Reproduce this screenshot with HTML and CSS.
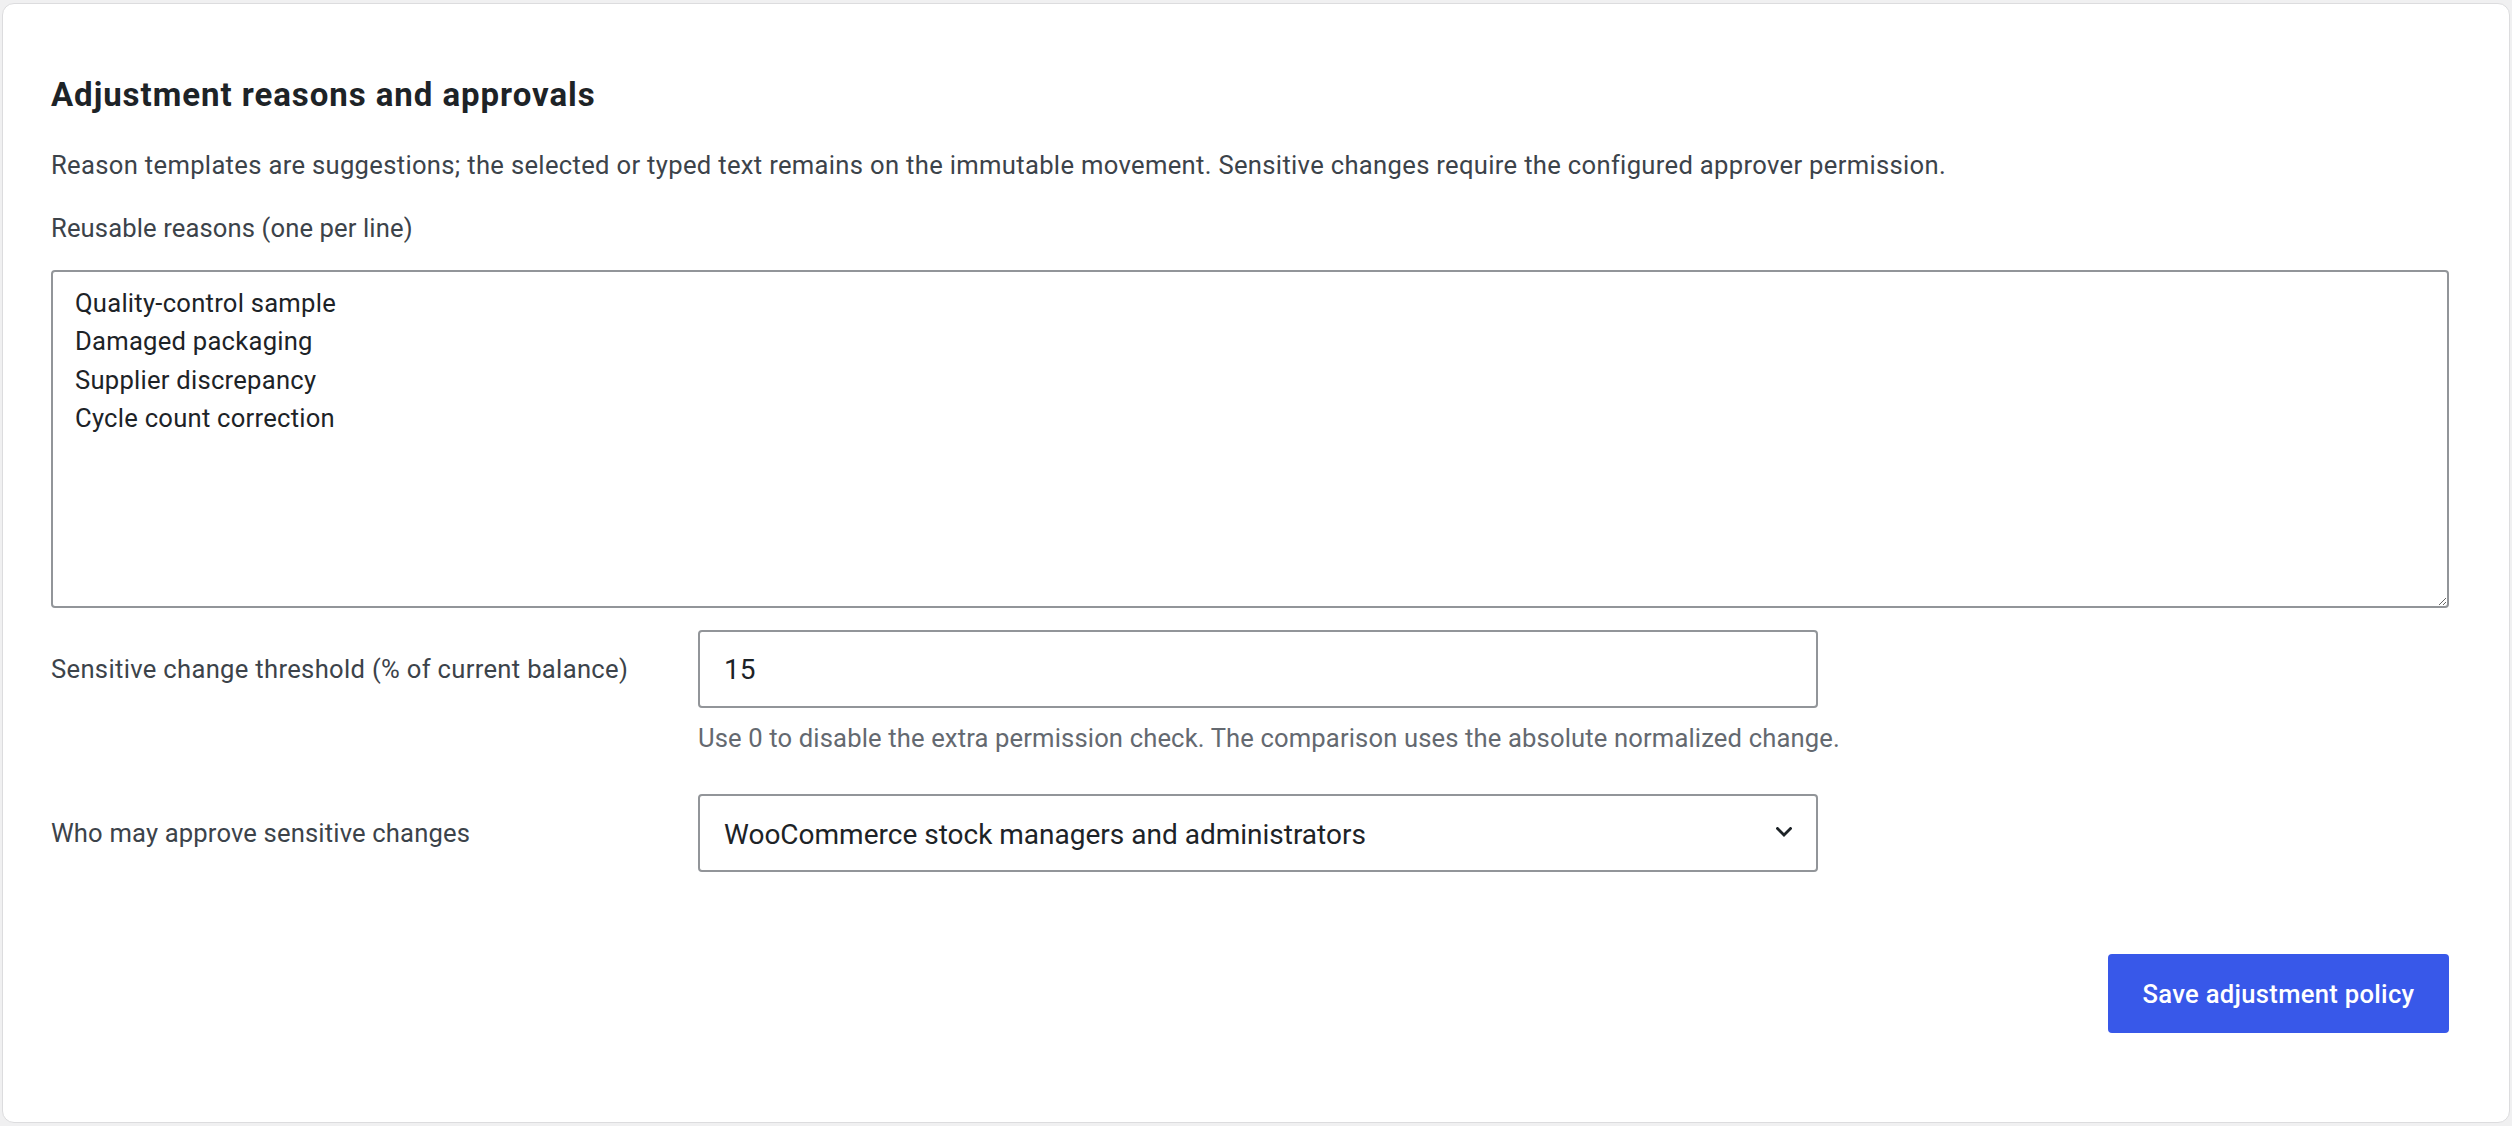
FILE: index.html
```html
<!DOCTYPE html>
<html lang="en">
<head>
<meta charset="utf-8">
<title>Adjustment reasons and approvals</title>
<link rel="stylesheet" href="styles.css">
</head>
<body>
<main class="page">
  <section class="card">
    <h2 class="card-title">Adjustment reasons and approvals</h2>
    <p class="card-intro">Reason templates are suggestions; the selected or typed text remains on the immutable movement. Sensitive changes require the configured approver permission.</p>

    <form class="policy-form">
      <label class="field-label" for="reasons">Reusable reasons (one per line)</label>
      <textarea id="reasons" class="reasons" spellcheck="false">Quality-control sample
Damaged packaging
Supplier discrepancy
Cycle count correction</textarea>

      <div class="field-row">
        <label class="row-label" for="threshold">Sensitive change threshold (% of current balance)</label>
        <div class="row-control">
          <input id="threshold" class="text-input" type="text" value="15">
          <p class="help">Use 0 to disable the extra permission check. The comparison uses the absolute normalized change.</p>
        </div>
      </div>

      <div class="field-row field-row-select">
        <label class="row-label row-label-tight" for="approver">Who may approve sensitive changes</label>
        <div class="row-control">
          <div class="select-wrap">
            <select id="approver" class="select-input">
              <option>WooCommerce stock managers and administrators</option>
              <option>Administrators only</option>
            </select>
            <svg class="chevron" width="16" height="10" viewBox="0 0 16 10" aria-hidden="true">
              <path d="M1.5 1.5 L8 8 L14.5 1.5" fill="none" stroke="#1d2327" stroke-width="2.8" stroke-linecap="square"/>
            </svg>
          </div>
        </div>
      </div>

      <div class="actions">
        <button type="button" class="btn-primary">Save adjustment policy</button>
      </div>
    </form>
  </section>
</main>
</body>
</html>
```

FILE: styles.css
```css
* {
  box-sizing: border-box;
}

html,
body {
  margin: 0;
  padding: 0;
  background: #f0f0f1;
}

body {
  font-family: Roboto, "Liberation Sans", Arial, sans-serif;
  font-size: 25.6px;
  letter-spacing: 0.32px;
  color: #3c434a;
}

.page {
  padding: 3px 2px 3px 2px;
}

.card {
  background: #ffffff;
  border: 1px solid #dcdcde;
  border-radius: 12px;
  padding: 71px 60px 88px 48px;
  min-height: 1120px;
}

.card-title {
  margin: 0;
  font-size: 33px;
  line-height: 40px;
  font-weight: 700;
  letter-spacing: 0.95px;
  color: #1d2327;
}

.card-intro {
  margin: 31px 0 0;
  line-height: 38.4px;
}

.policy-form {
  display: flex;
  flex-direction: column;
}

.field-label {
  margin-top: 25px;
  line-height: 38.4px;
  letter-spacing: 0.12px;
}

.reasons {
  display: block;
  margin-top: 22px;
  width: 100%;
  height: 338px;
  padding: 12px 22px;
  border: 2px solid #929599;
  border-radius: 4px;
  font-family: inherit;
  font-size: 25.6px;
  letter-spacing: 0.25px;
  line-height: 38.4px;
  color: #1d2327;
  background: #fff;
  resize: vertical;
}

.field-row {
  display: grid;
  grid-template-columns: 647px 1120px;
  margin-top: 22px;
}

.field-row-select {
  margin-top: 37px;
}

.row-label {
  height: 78px;
  line-height: 78px;
  white-space: nowrap;
}

.row-label-tight {
  letter-spacing: 0.16px;
}

.row-control {
  display: flex;
  flex-direction: column;
}

.text-input,
.select-input {
  width: 100%;
  height: 78px;
  padding: 2px 24px 0;
  border: 2px solid #929599;
  border-radius: 4px;
  font-family: inherit;
  font-size: 28px;
  letter-spacing: 0;
  color: #1d2327;
  background: #fff;
}

.help {
  margin: 11px 0 0;
  line-height: 38.4px;
  letter-spacing: 0.14px;
  white-space: nowrap;
  color: #646970;
}

.select-wrap {
  position: relative;
}

.select-input {
  appearance: none;
  -webkit-appearance: none;
  padding-right: 64px;
}

.chevron {
  position: absolute;
  right: 26px;
  top: 33px;
  pointer-events: none;
}

.actions {
  display: flex;
  justify-content: flex-end;
  margin-top: 82px;
}

.btn-primary {
  width: 341px;
  height: 79px;
  border: 0;
  border-radius: 4px;
  background: #3858e9;
  color: #ffffff;
  font-family: inherit;
  font-size: 25.6px;
  font-weight: 500;
  letter-spacing: 0.3px;
  cursor: pointer;
}
```
